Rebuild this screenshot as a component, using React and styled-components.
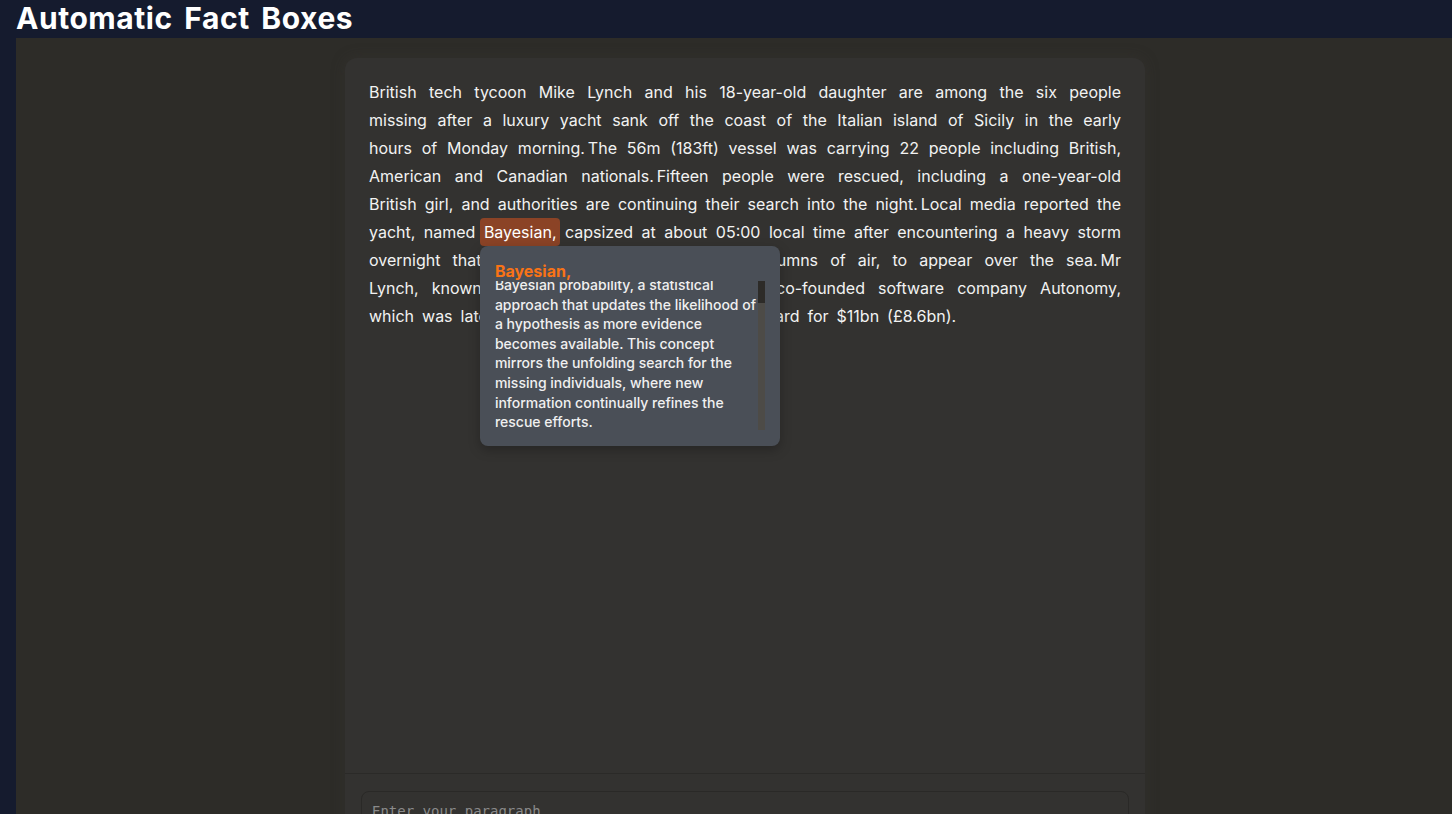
import { useEffect, useRef } from "react";
import styled, { createGlobalStyle } from "styled-components";

const GlobalStyle = createGlobalStyle`
  html, body {
    margin: 0;
    padding: 0;
    background: #151b2e;
    overflow: hidden;
  }
  body {
    font-family: Inter, "Noto Sans", sans-serif;
  }
`;

const Page = styled.div`
  height: 814px;
  display: flex;
  flex-direction: column;
`;

const Title = styled.h1`
  margin: 0;
  padding-left: 16px;
  height: 38px;
  line-height: 36px;
  font-size: 30px;
  font-weight: 700;
  color: #ffffff;
  letter-spacing: 0.55px;
  word-spacing: 4px;
  flex-shrink: 0;
`;

const Main = styled.main`
  flex: 1;
  margin-left: 16px;
  background: #2d2c28;
  display: flex;
  justify-content: center;
  align-items: flex-start;
  padding: 20px 0 0 22px;
  overflow: hidden;
`;

const Card = styled.section`
  width: 800px;
  flex-shrink: 0;
  background: #333230;
  border-radius: 12px 12px 0 0;
  box-shadow: 0 0 14px rgba(60, 58, 54, 0.35);
  display: flex;
  flex-direction: column;
`;

const Body = styled.div`
  height: 716px;
  flex-shrink: 0;
  padding: 20px 24px;
  box-sizing: border-box;
  border-bottom: 1px solid #2b2a28;
`;

const Paragraph = styled.p`
  margin: 0;
  color: #f2f2f2;
  font-size: 16px;
  line-height: 28px;
  word-spacing: 3.5px;
  text-align: justify;
`;

const Anchor = styled.span`
  position: relative;
  display: inline-block;
  line-height: 19px;
  word-spacing: normal;
`;

/* the highlight spills into the neighbouring spaces instead of widening the word */
const Mark = styled.span`
  background: #8b4326;
  color: #ffffff;
  border-radius: 4px;
  padding: 4px 4px;
  margin: 0 -4px;
`;

const FactBox = styled.div`
  position: absolute;
  left: -4px;
  top: 23px;
  width: 300px;
  height: 200px;
  box-sizing: border-box;
  padding: 15px 15px 14px;
  background: #4a4f57;
  border-radius: 8px;
  box-shadow: 0 4px 12px rgba(0, 0, 0, 0.25);
  z-index: 10;
  text-align: left;
  display: flex;
  flex-direction: column;
`;

const FactTitle = styled.div`
  color: #f97316;
  font-size: 16px;
  font-weight: 700;
  line-height: 20px;
`;

const FactScroll = styled.div`
  height: 151px;
  overflow-y: auto;
  scrollbar-width: none;
  &::-webkit-scrollbar {
    display: none;
  }
`;

const FactText = styled.p`
  margin: 0;
  padding: 22px 7px 0 0;
  color: #f0f0f0;
  font-size: 14px;
  line-height: 19.6px;
  font-weight: 500;
`;

const ScrollTrack = styled.div`
  position: absolute;
  left: 278px;
  top: 35px;
  width: 7px;
  height: 149px;
  background: #2d2b28;
`;

const ScrollThumb = styled.div`
  position: absolute;
  left: 0;
  right: 0;
  bottom: 0;
  height: 127px;
  background: #4d4b47;
`;

const Footer = styled.div`
  padding: 17px 16px 0;
`;

const Input = styled.textarea`
  display: block;
  width: 100%;
  height: 80px;
  box-sizing: border-box;
  background: #333230;
  border: 1px solid #2a2927;
  border-radius: 8px;
  padding: 11px 10px;
  resize: none;
  outline: none;
  font-family: "DejaVu Sans Mono", monospace;
  font-size: 14px;
  color: #ddd;
  &::placeholder {
    color: #8a8a8a;
  }
`;

const before = [
  "British tech tycoon Mike Lynch and his 18-year-old daughter are among the six people missing after a luxury yacht sank off the coast of the Italian island of Sicily in the early hours of Monday morning.",
  "The 56m (183ft) vessel was carrying 22 people including British, American and Canadian nationals.",
  "Fifteen people were rescued, including a one-year-old British girl, and authorities are continuing their search into the night.",
  "Local media reported the yacht, named ",
].join("\u2009");

const after = [
  " capsized at about 05:00 local time after encountering a heavy storm overnight that caused a waterspout, rotating columns of air, to appear over the sea.",
  "Mr Lynch, known as Britain's Bill Gates, sold his co-founded software company Autonomy, which\u00a0was\u00a0later sold to US tech firm Hewlett-Packard for $11bn (£8.6bn).",
].join("\u2009");

const App = () => {
  const scrollRef = useRef(null);

  useEffect(() => {
    if (scrollRef.current) {
      scrollRef.current.scrollTop = scrollRef.current.scrollHeight;
    }
  }, []);

  return (
    <>
      <GlobalStyle />
      <Page>
        <Title>Automatic Fact Boxes</Title>
        <Main>
          <Card>
            <Body>
              <Paragraph>
                {before}
                <Anchor>
                  <Mark>Bayesian,</Mark>
                  <FactBox>
                    <FactTitle>Bayesian,</FactTitle>
                    <FactScroll ref={scrollRef}>
                      <FactText>
                        Bayesian probability, a statistical approach that updates the
                        likelihood of a hypothesis as more evidence becomes available.
                        This concept mirrors the unfolding search for the missing
                        individuals, where new information continually refines the
                        rescue efforts.
                      </FactText>
                    </FactScroll>
                    <ScrollTrack>
                      <ScrollThumb />
                    </ScrollTrack>
                  </FactBox>
                </Anchor>
                {after}
              </Paragraph>
            </Body>
            <Footer>
              <Input placeholder="Enter your paragraph" />
            </Footer>
          </Card>
        </Main>
      </Page>
    </>
  );
};

export default App;
